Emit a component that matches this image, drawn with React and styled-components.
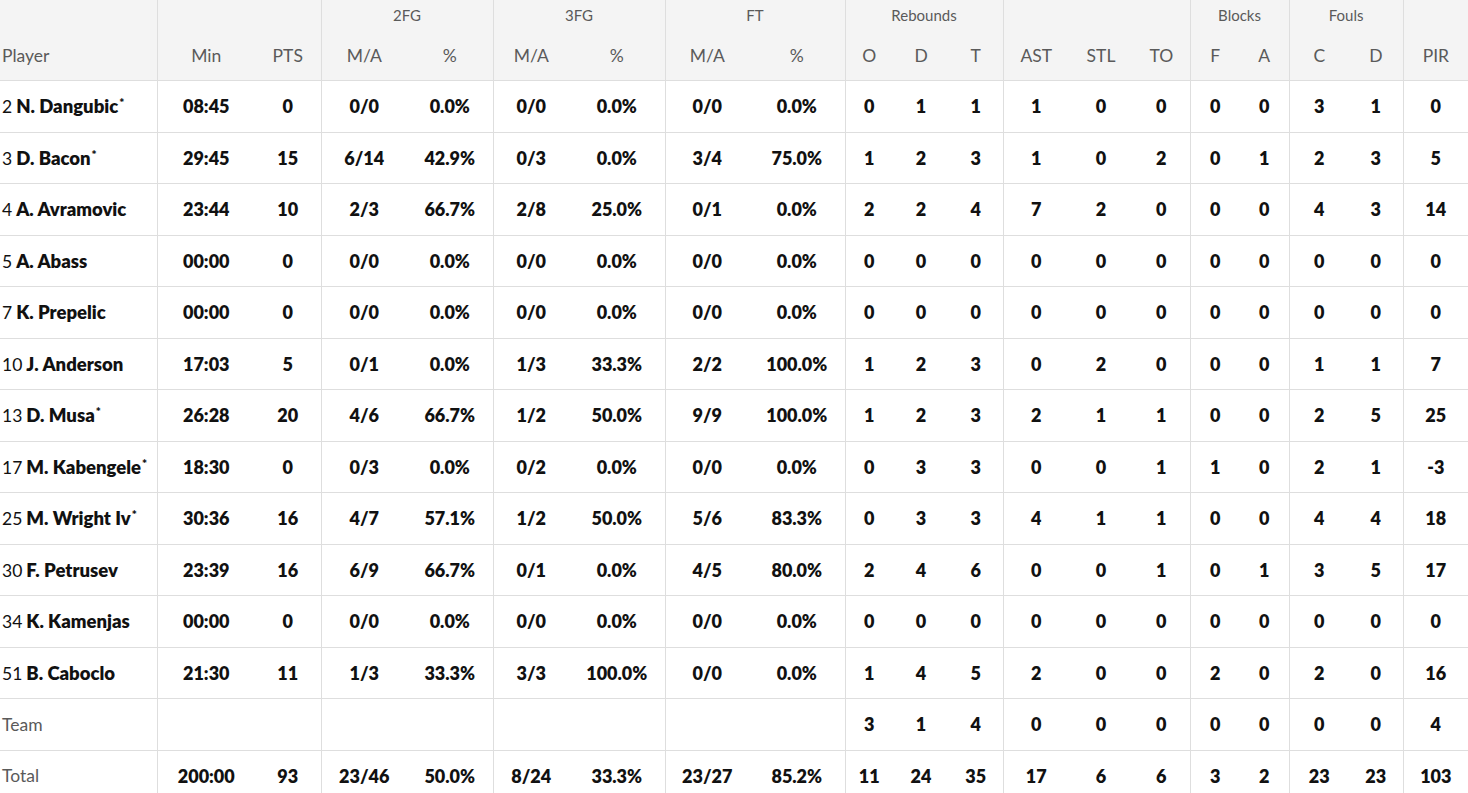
import styled, { createGlobalStyle } from "styled-components";

const GlobalStyle = createGlobalStyle`
  html, body {
    margin: 0;
    padding: 0;
    background: #ffffff;
  }
  body {
    font-family: Lato, "Open Sans", "Liberation Sans", sans-serif;
    color: #111111;
  }
`;

// column widths taken from the screenshot
const COLUMNS = [157, 98, 66, 86, 86, 76, 96, 84, 96, 48, 56, 54, 66, 64, 57, 50, 49, 60, 54, 65];

// index of the columns that start a group (get a left border)
const GROUP_STARTS = new Set([1, 3, 5, 7, 9, 12, 15, 17, 19]);

const GROUPS = [
  { label: "", span: 1 },
  { label: "", span: 2 },
  { label: "2FG", span: 2 },
  { label: "3FG", span: 2 },
  { label: "FT", span: 2 },
  { label: "Rebounds", span: 3 },
  { label: "", span: 3 },
  { label: "Blocks", span: 2 },
  { label: "Fouls", span: 2 },
  { label: "", span: 1 },
];

const HEADINGS = ["Player", "Min", "PTS", "M/A", "%", "M/A", "%", "M/A", "%", "O", "D", "T", "AST", "STL", "TO", "F", "A", "C", "D", "PIR"];

const players = [
  { no: 2, name: "N. Dangubic", starter: true, stats: ["08:45", 0, "0/0", "0.0%", "0/0", "0.0%", "0/0", "0.0%", 0, 1, 1, 1, 0, 0, 0, 0, 3, 1, 0] },
  { no: 3, name: "D. Bacon", starter: true, stats: ["29:45", 15, "6/14", "42.9%", "0/3", "0.0%", "3/4", "75.0%", 1, 2, 3, 1, 0, 2, 0, 1, 2, 3, 5] },
  { no: 4, name: "A. Avramovic", stats: ["23:44", 10, "2/3", "66.7%", "2/8", "25.0%", "0/1", "0.0%", 2, 2, 4, 7, 2, 0, 0, 0, 4, 3, 14] },
  { no: 5, name: "A. Abass", stats: ["00:00", 0, "0/0", "0.0%", "0/0", "0.0%", "0/0", "0.0%", 0, 0, 0, 0, 0, 0, 0, 0, 0, 0, 0] },
  { no: 7, name: "K. Prepelic", stats: ["00:00", 0, "0/0", "0.0%", "0/0", "0.0%", "0/0", "0.0%", 0, 0, 0, 0, 0, 0, 0, 0, 0, 0, 0] },
  { no: 10, name: "J. Anderson", stats: ["17:03", 5, "0/1", "0.0%", "1/3", "33.3%", "2/2", "100.0%", 1, 2, 3, 0, 2, 0, 0, 0, 1, 1, 7] },
  { no: 13, name: "D. Musa", starter: true, stats: ["26:28", 20, "4/6", "66.7%", "1/2", "50.0%", "9/9", "100.0%", 1, 2, 3, 2, 1, 1, 0, 0, 2, 5, 25] },
  { no: 17, name: "M. Kabengele", starter: true, stats: ["18:30", 0, "0/3", "0.0%", "0/2", "0.0%", "0/0", "0.0%", 0, 3, 3, 0, 0, 1, 1, 0, 2, 1, -3] },
  { no: 25, name: "M. Wright Iv", starter: true, stats: ["30:36", 16, "4/7", "57.1%", "1/2", "50.0%", "5/6", "83.3%", 0, 3, 3, 4, 1, 1, 0, 0, 4, 4, 18] },
  { no: 30, name: "F. Petrusev", stats: ["23:39", 16, "6/9", "66.7%", "0/1", "0.0%", "4/5", "80.0%", 2, 4, 6, 0, 0, 1, 0, 1, 3, 5, 17] },
  { no: 34, name: "K. Kamenjas", stats: ["00:00", 0, "0/0", "0.0%", "0/0", "0.0%", "0/0", "0.0%", 0, 0, 0, 0, 0, 0, 0, 0, 0, 0, 0] },
  { no: 51, name: "B. Caboclo", stats: ["21:30", 11, "1/3", "33.3%", "3/3", "100.0%", "0/0", "0.0%", 1, 4, 5, 2, 0, 0, 2, 0, 2, 0, 16] },
];

const teamRow = ["", "", "", "", "", "", "", "", 3, 1, 4, 0, 0, 0, 0, 0, 0, 0, 4];
const totalRow = ["200:00", 93, "23/46", "50.0%", "8/24", "33.3%", "23/27", "85.2%", 11, 24, 35, 17, 6, 6, 3, 2, 23, 23, 103];

const Table = styled.table`
  width: 1468px;
  border-collapse: collapse;
  table-layout: fixed;
`;

const Head = styled.thead`
  background: #f4f4f4;
`;

const GroupCell = styled.th`
  height: 30px;
  padding: 0;
  font-size: 15px;
  font-weight: 400;
  color: #5a5a5a;
  text-align: center;
  vertical-align: middle;
  border-left: ${(p) => (p.$divider ? "1px solid #dedede" : "none")};
`;

const HeadCell = styled.th`
  height: 50px;
  padding: 0 0 0 ${(p) => (p.$left ? "2px" : "0")};
  font-size: 17.5px;
  font-weight: 400;
  color: #5a5a5a;
  text-align: ${(p) => (p.$left ? "left" : "center")};
  vertical-align: middle;
  border-left: ${(p) => (p.$divider ? "1px solid #dedede" : "none")};
  border-bottom: 1px solid #dedede;
`;

const Row = styled.tr`
  height: 51.5px;
  border-bottom: 1px solid #dedede;
`;

const Cell = styled.td`
  padding: 0;
  font-size: 18px;
  font-weight: 800;
  color: #111111;
  text-align: center;
  vertical-align: middle;
  white-space: nowrap;
  border-left: ${(p) => (p.$divider ? "1px solid #dedede" : "none")};
`;

const NameCell = styled.td`
  padding: 0 0 0 2px;
  font-size: 17.5px;
  text-align: left;
  vertical-align: middle;
  white-space: nowrap;
  color: ${(p) => (p.$muted ? "#5a5a5a" : "#111111")};
`;

const Number = styled.span`
  font-weight: 400;
  margin-right: 4px;
`;

const Name = styled.span`
  font-weight: 800;
  font-size: 18.5px;
`;

const Star = styled.sup`
  font-size: 12px;
  font-weight: 800;
  vertical-align: 6px;
  line-height: 0;
  margin-left: 1px;
`;

function StatCells({ values }) {
  return values.map((v, i) => (
    <Cell key={i} $divider={GROUP_STARTS.has(i + 1)}>
      {v}
    </Cell>
  ));
}

export default function App() {
  let colIndex = 0;
  return (
    <>
      <GlobalStyle />
      <Table>
        <colgroup>
          {COLUMNS.map((w, i) => (
            <col key={i} style={{ width: w }} />
          ))}
        </colgroup>
        <Head>
          <tr>
            {GROUPS.map((g, i) => {
              const start = colIndex;
              colIndex += g.span;
              return (
                <GroupCell key={i} colSpan={g.span} $divider={GROUP_STARTS.has(start)}>
                  {g.label}
                </GroupCell>
              );
            })}
          </tr>
          <tr>
            {HEADINGS.map((h, i) => (
              <HeadCell key={i} $left={i === 0} $divider={GROUP_STARTS.has(i)}>
                {h}
              </HeadCell>
            ))}
          </tr>
        </Head>
        <tbody>
          {players.map((p) => (
            <Row key={p.no}>
              <NameCell>
                <Number>{p.no}</Number>
                <Name>{p.name}</Name>
                {p.starter && <Star>*</Star>}
              </NameCell>
              <StatCells values={p.stats} />
            </Row>
          ))}
          <Row>
            <NameCell $muted>Team</NameCell>
            <StatCells values={teamRow} />
          </Row>
          <Row>
            <NameCell $muted>Total</NameCell>
            <StatCells values={totalRow} />
          </Row>
        </tbody>
      </Table>
    </>
  );
}
